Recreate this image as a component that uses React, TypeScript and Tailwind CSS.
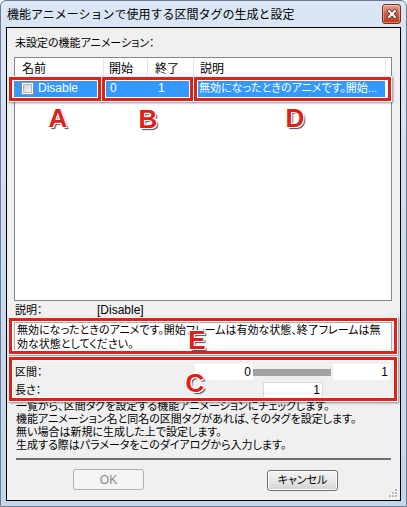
import React from 'react';

const ui = "font-['Liberation_Sans','Noto_Sans_CJK_JP',sans-serif] text-[11px] [font-feature-settings:'palt']";

function CloseButton() {
  return (
    <div className="w-[19px] h-[20px] rounded-[3px] border border-[#6d3026] bg-gradient-to-b from-[#eaa590] via-[#d5583b] to-[#c2381d] flex items-center justify-center shadow-[inset_0_0_0_1px_rgba(255,255,255,0.35)]">
      <svg width="10" height="10" viewBox="0 0 10 10">
        <path d="M2 2 L8 8 M8 2 L2 8" stroke="#3a3a3a" strokeWidth="3.6" strokeLinecap="square" />
        <path d="M2 2 L8 8 M8 2 L2 8" stroke="#ffffff" strokeWidth="2" strokeLinecap="square" />
      </svg>
    </div>
  );
}

function Checkbox() {
  return (
    <div className="w-[13px] h-[13px] border border-[#8e8f8f] bg-white p-[1px] shrink-0">
      <div className="w-full h-full bg-gradient-to-br from-[#cbcfd5] to-[#f6f6f6] border border-[#b4b8bd]" />
    </div>
  );
}

function RedBox({ className }: { className: string }) {
  return (
    <div
      className={`absolute border-[3px] border-[#d9241c] shadow-[inset_0_0_0_1px_#ffffff,0_0_0_1px_#f4f4f4,1px_1px_2px_1px_rgba(40,55,80,0.55)] ${className}`}
    />
  );
}

function Letter({ ch, className }: { ch: string; className: string }) {
  return (
    <span
      className={`absolute -translate-x-1/2 font-['Liberation_Sans',sans-serif] font-bold text-[26px] leading-none text-[#dd2119] [text-shadow:-1px_-1px_0_#fff,1px_-1px_0_#fff,-1px_1px_0_#fff,1px_1px_0_#fff,2px_2px_1px_#3d4e63] ${className}`}
    >
      {ch}
    </span>
  );
}

export default function App() {
  return (
    <div className="relative w-[407px] h-[507px] bg-white">
      <div className="w-[407px] h-[507px] flex flex-col border border-[#6c7c90] rounded-t-[6px] bg-gradient-to-b from-[#dae6f4] via-[#cddcee] to-[#c3d6ec]">
        {/* title bar */}
        <div className="h-[26px] flex items-center justify-between pl-[6px] pr-[5px]">
          <span className="font-['Noto_Sans_CJK_JP',sans-serif] text-[12px] text-black leading-none">
            機能アニメーションで使用する区間タグの生成と設定
          </span>
          <CloseButton />
        </div>

        {/* client */}
        <div className={`relative mx-[5px] h-[474px] border border-black bg-[#f0f0f0] flex flex-col text-black ${ui}`}>
          <div className="pt-[8px] pl-[8px] leading-[15px]">未設定の機能アニメーション：</div>

          {/* list view */}
          <div className="ml-[7px] mt-[6px] w-[378px] h-[244px] border border-[#828790] bg-white">
            <div className="flex h-[20px] border-b border-[#e3e6ea] leading-[15px] text-[12px]">
              <div className="w-[89px] pl-[7px] pt-[4px] border-r border-[#e3e6ea]">名前</div>
              <div className="w-[44px] pl-[5px] pt-[4px] border-r border-[#e3e6ea]">開始</div>
              <div className="w-[46px] pl-[7px] pt-[4px] border-r border-[#e3e6ea]">終了</div>
              <div className="w-[192px] pl-[6px] pt-[4px] border-r border-[#e3e6ea]">説明</div>
            </div>
            <div className="mt-[1px] flex h-[18px] w-[370px] items-center bg-[#3399ff] text-white text-[12px]">
              <div className="w-[89px] flex items-center pl-[6px] gap-[4px]">
                <Checkbox />
                <span>Disable</span>
              </div>
              <div className="w-[44px] pl-[6px]">0</div>
              <div className="w-[46px] pl-[10px]">1</div>
              <div className="w-[191px] pl-[5px] whitespace-nowrap overflow-hidden text-[11px]">
                無効になったときのアニメです。開始...
              </div>
            </div>
          </div>

          {/* description */}
          <div className="mt-[2px] flex pl-[8px] leading-[15px]">
            <span className="w-[82px]">説明：</span>
            <span className="text-[12px]">[Disable]</span>
          </div>
          <div className="ml-[7px] mt-[4px] w-[378px] h-[30px] border border-[#abadb3] bg-white px-[2px] leading-[14px] whitespace-nowrap overflow-hidden">
            <div>無効になったときのアニメです。開始フレームは有効な状態、終了フレームは無</div>
            <div>効な状態としてください。</div>
          </div>

          {/* range */}
          <div className="mt-[12px] flex h-[16px] items-center">
            <span className="w-[188px] pl-[8px]">区間：</span>
            <div className="w-[58px] h-[16px] bg-white text-right pr-[2px] leading-[16px] text-[12px]">0</div>
            <div className="w-[80px] flex items-center">
              <div className="h-[7px] w-[78px] bg-[#a2a2a2]" />
            </div>
            <div className="w-[57px] h-[16px] bg-white text-right pr-[2px] leading-[16px] text-[12px]">1</div>
          </div>
          <div className="mt-[2px] flex h-[17px] items-center">
            <span className="w-[256px] pl-[8px]">長さ：</span>
            <div className="w-[60px] h-[17px] border border-[#dadada] bg-white text-right pr-[2px] leading-[15px] text-[12px]">1</div>
          </div>

          {/* help text */}
          <div className="mt-[1px] pl-[9px] leading-[13px]">
            <div>一覧から、区間タグを設定する機能アニメーションにチェックします。</div>
            <div>機能アニメーション名と同名の区間タグがあれば、そのタグを設定します。</div>
            <div>無い場合は新規に生成した上で設定します。</div>
            <div>生成する際はパラメータをこのダイアログから入力します。</div>
          </div>

          <div className="ml-[9px] mt-[6px] h-[2px] w-[375px] bg-[#6e6e6e]" />

          {/* buttons */}
          <div className="mt-[9px] flex items-start">
            <div className="ml-[66px] w-[71px] h-[21px] rounded-[3px] border border-[#adb2b5] bg-[#f4f4f4] flex items-center justify-center text-[#8a8a8a] text-[12px]">
              OK
            </div>
            <div className="ml-[123px] mt-[1px] w-[71px] h-[21px] rounded-[3px] border border-[#707070] bg-gradient-to-b from-[#f3f3f3] via-[#e8e8e8] to-[#d2d2d2] flex items-center justify-center shadow-[inset_0_0_0_1px_#fcfcfc]">
              キャンセル
            </div>
          </div>

          {/* size grip */}
          <svg className="absolute right-[2px] bottom-[2px]" width="10" height="10" viewBox="0 0 10 10">
            <g fill="#b8b8b8">
              <rect x="7" y="1" width="2" height="2" />
              <rect x="4" y="4" width="2" height="2" />
              <rect x="7" y="4" width="2" height="2" />
              <rect x="1" y="7" width="2" height="2" />
              <rect x="4" y="7" width="2" height="2" />
              <rect x="7" y="7" width="2" height="2" />
            </g>
          </svg>
        </div>
      </div>

      {/* annotations */}
      <RedBox className="left-[9px] top-[77px] w-[92px] h-[24px]" />
      <RedBox className="left-[102px] top-[77px] w-[91px] h-[24px]" />
      <RedBox className="left-[194px] top-[77px] w-[197px] h-[24px]" />
      <RedBox className="left-[9px] top-[318px] w-[388px] h-[36px]" />
      <RedBox className="left-[9px] top-[357px] w-[388px] h-[44px]" />
      <Letter ch="A" className="left-[58px] top-[105px]" />
      <Letter ch="B" className="left-[148px] top-[106px]" />
      <Letter ch="D" className="left-[295px] top-[105px]" />
      <Letter ch="E" className="left-[197px] top-[327px]" />
      <Letter ch="C" className="left-[195px] top-[370px]" />
    </div>
  );
}
